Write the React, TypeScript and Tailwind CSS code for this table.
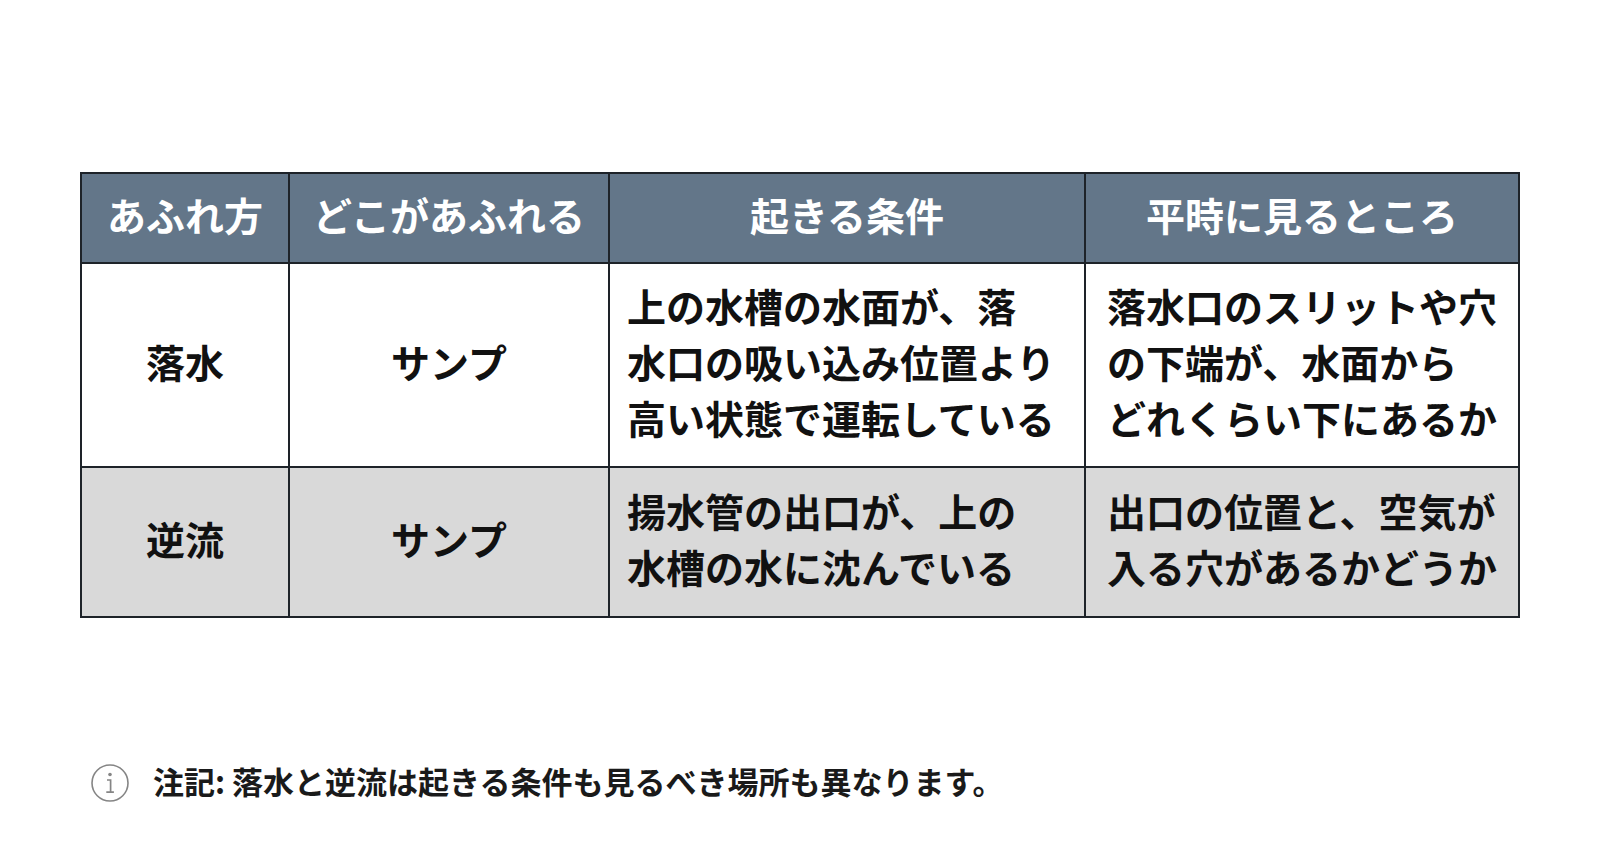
import React from "react"

const font = { fontFamily: '"Noto Sans CJK JP", "Noto Sans", sans-serif' }

const rows = [
  {
    kind: "落水",
    where: "サンプ",
    when: ["上の水槽の水面が、落", "水口の吸い込み位置より", "高い状態で運転している"],
    check: ["落水口のスリットや穴", "の下端が、水面から", "どれくらい下にあるか"],
    bg: "bg-white",
    h: "h-[204px]",
  },
  {
    kind: "逆流",
    where: "サンプ",
    when: ["揚水管の出口が、上の", "水槽の水に沈んでいる"],
    check: ["出口の位置と、空気が", "入る穴があるかどうか"],
    bg: "bg-[#d9d9d9]",
    h: "h-[150px]",
  },
]

function InfoIcon() {
  return (
    <svg width="40" height="40" viewBox="0 0 40 40" fill="none">
      <circle cx="20" cy="20" r="18" stroke="#858585" strokeWidth="1.6" />
      <circle cx="20" cy="11.5" r="1.8" fill="#858585" />
      <path d="M17 17h3.6v12M16.3 29.2h7.6" stroke="#858585" strokeWidth="1.7" />
    </svg>
  )
}

export default function App() {
  return (
    <div className="w-full h-[863px] bg-white overflow-hidden" style={font}>
      <div className="pt-[172px] pl-[80px]">
        <table className="table-fixed border-collapse w-[1438px] text-[39px] leading-[56px] font-bold text-[#111]">
          <colgroup>
            <col className="w-[208px]" />
            <col className="w-[320px]" />
            <col className="w-[476px]" />
            <col className="w-[434px]" />
          </colgroup>
          <thead>
            <tr className="h-[90px] bg-[#637689] text-white">
              {["あふれ方", "どこがあふれる", "起きる条件", "平時に見るところ"].map((t) => (
                <th key={t} className="border-2 border-[#1e2329] pb-[8px] font-bold text-center align-middle whitespace-nowrap">
                  {t}
                </th>
              ))}
            </tr>
          </thead>
          <tbody>
            {rows.map((r) => (
              <tr key={r.kind} className={`${r.bg} ${r.h}`}>
                <td className="border-2 border-[#1e2329] pb-[8px] text-center align-middle">{r.kind}</td>
                <td className="border-2 border-[#1e2329] pb-[8px] text-center align-middle">{r.where}</td>
                <td className="border-2 border-[#1e2329] pb-[8px] pl-[17px] align-middle whitespace-nowrap">
                  {r.when.map((l) => (
                    <div key={l}>{l}</div>
                  ))}
                </td>
                <td className="border-2 border-[#1e2329] pb-[8px] pl-[21px] align-middle whitespace-nowrap">
                  {r.check.map((l) => (
                    <div key={l}>{l}</div>
                  ))}
                </td>
              </tr>
            ))}
          </tbody>
        </table>

        {/* note */}
        <div className="mt-[140px] flex items-center gap-[23px] pl-[10px]">
          <InfoIcon />
          <p className="pb-[3px] text-[31px] leading-[46px] font-bold text-[#1a1a1a]">注記: 落水と逆流は起きる条件も見るべき場所も異なります。</p>
        </div>
      </div>
    </div>
  )
}
